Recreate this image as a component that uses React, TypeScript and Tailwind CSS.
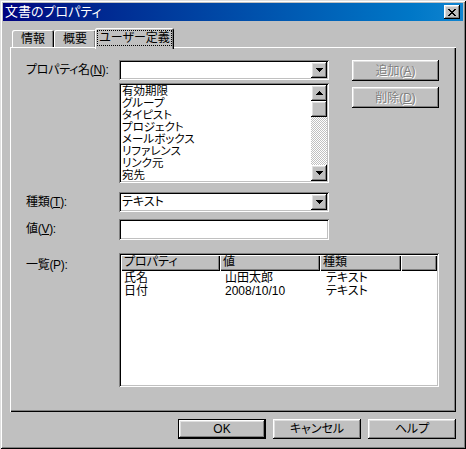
import type { ReactNode } from "react";

const raised =
  "shadow-[inset_-1px_-1px_#000,inset_1px_1px_#fff,inset_-2px_-2px_#808080,inset_2px_2px_#dfdfdf]";
const sunken =
  "shadow-[inset_1px_1px_#808080,inset_-1px_-1px_#fff,inset_2px_2px_#000,inset_-2px_-2px_#c0c0c0]";

const listItems = ["有効期限", "グループ", "タイピスト", "プロジェクト", "メールボックス", "リファレンス", "リンク元", "宛先"];

const rows = [
  { name: "氏名", value: "山田太郎", type: "テキスト" },
  { name: "日付", value: "2008/10/10", type: "テキスト" },
];

function Arrow({ up = false }: { up?: boolean }) {
  return (
    <svg width="7" height="4" viewBox="0 0 7 4" shapeRendering="crispEdges" className={up ? "rotate-180" : ""}>
      <rect x="0" y="0" width="7" height="1" />
      <rect x="1" y="1" width="5" height="1" />
      <rect x="2" y="2" width="3" height="1" />
      <rect x="3" y="3" width="1" height="1" />
    </svg>
  );
}

function ArrowButton({ up = false }: { up?: boolean }) {
  return (
    <div className={`w-[16px] h-[16px] shrink-0 bg-[#c0c0c0] ${raised} flex items-center justify-center`}>
      <Arrow up={up} />
    </div>
  );
}

function Combo({ value }: { value?: string }) {
  return (
    <div className={`h-[20px] bg-white ${sunken} flex items-center p-[2px]`}>
      <span className="flex-1 pl-[1px] leading-[16px]">{value}</span>
      <ArrowButton />
    </div>
  );
}

function Key({ k }: { k: string }) {
  return <span className="underline underline-offset-[1px]">{k}</span>;
}

function Label({ children, className = "" }: { children: ReactNode; className?: string }) {
  return <div className={`w-[93px] shrink-0 leading-[16px] tracking-[-0.3px] ${className}`}>{children}</div>;
}

function Button({
  children,
  disabled = false,
  isDefault = false,
  className = "",
}: {
  children: ReactNode;
  disabled?: boolean;
  isDefault?: boolean;
  className?: string;
}) {
  return (
    <div
      className={`bg-[#c0c0c0] flex items-center justify-center leading-[16px] ${
        isDefault ? "border border-black" : ""
      } ${className}`}
    >
      <div
        className={`w-full h-full flex items-center justify-center ${raised} ${
          disabled ? "text-[#808080] [text-shadow:1px_1px_#fff]" : ""
        }`}
      >
        {children}
      </div>
    </div>
  );
}

function Tab({ label }: { label: string }) {
  return (
    <div className="w-[42px] h-[17px] shadow-[inset_1px_1px_#fff,inset_-1px_0_#000,inset_-2px_0_#808080] rounded-t-[2px] flex items-start justify-center pt-[2px] leading-[14px]">
      {label}
    </div>
  );
}

const cols = ["w-[99px]", "w-[100px]", "w-[81px]"];

export default function App() {
  return (
    <div className="w-[466px] h-[449px] bg-[#c0c0c0] p-[3px] shadow-[inset_1px_1px_#dfdfdf,inset_-1px_-1px_#000,inset_2px_2px_#fff,inset_-2px_-2px_#808080] text-[12px] text-black font-['Liberation_Sans','Noto_Sans_CJK_JP',sans-serif] [font-feature-settings:'palt'] flex flex-col">
      {/* Title bar */}
      <div className="h-[18px] shrink-0 flex items-center justify-between bg-gradient-to-r from-[#000080] to-[#1084d0] pl-[2px] pr-[3px]">
        <span className="text-white text-[13px] leading-[16px]">文書のプロパティ</span>
        <div className={`w-[16px] h-[14px] bg-[#c0c0c0] ${raised} flex items-center justify-center`}>
          <svg width="8" height="7" viewBox="0 0 8 7" shapeRendering="crispEdges">
            <path d="M0 0h2v1h1v1h2V1h1V0h2v1H7v1H6v1H5v1h1v1h1v1h1v1H6V6H5V5H3v1H2v1H0V6h1V5h1V4h1V3H2V2H1V1H0z" />
          </svg>
        </div>
      </div>

      {/* Tabs */}
      <div className="mt-[7px] h-[19px] shrink-0 flex items-end pl-[9px]">
        <Tab label="情報" />
        <Tab label="概要" />
        <div className="relative z-10 -mb-[2px] -ml-[1px] w-[79px] h-[21px] bg-[#c0c0c0] shadow-[inset_1px_1px_#fff,inset_-1px_0_#000,inset_-2px_0_#808080] rounded-t-[2px] flex items-start justify-center pt-[2px]">
          <span className="border border-dotted border-black px-[1px] leading-[14px]">ユーザー定義</span>
        </div>
      </div>

      {/* Tab page */}
      <div className="mx-[7px] h-[365px] shrink-0 shadow-[inset_1px_1px_#fff,inset_-1px_-1px_#000,inset_-2px_-2px_#808080] pl-[16px] pt-[13px]">
        <div className="flex">
          <Label className="pt-[2px]">
            プロパティ名(<Key k="N" />):
          </Label>
          <div className="w-[210px] flex flex-col gap-[3px]">
            <Combo />
            <div className={`h-[100px] bg-white ${sunken} p-[2px] flex`}>
              <div className="flex-1 pl-[1px] text-[11.5px] leading-[12px] overflow-hidden">
                {listItems.map((item) => (
                  <div key={item} className="h-[12px]">
                    {item}
                  </div>
                ))}
              </div>
              <div className="w-[16px] flex flex-col">
                <ArrowButton up />
                <div className={`w-[16px] h-[16px] bg-[#c0c0c0] ${raised}`} />
                <div className="flex-1 bg-[image:repeating-conic-gradient(#fff_0_25%,#c0c0c0_0_50%)] bg-[length:2px_2px]" />
                <ArrowButton />
              </div>
            </div>
          </div>
          <div className="ml-[23px] w-[87px] flex flex-col gap-[6px]">
            <Button disabled className="h-[21px]">
              追加(<Key k="A" />)
            </Button>
            <Button disabled className="h-[21px]">
              削除(<Key k="D" />)
            </Button>
          </div>
        </div>

        <div className="mt-[9px] flex">
          <Label className="pt-[2px]">
            種類(<Key k="T" />):
          </Label>
          <div className="w-[210px]">
            <Combo value="テキスト" />
          </div>
        </div>

        <div className="mt-[7px] flex">
          <Label className="pt-[2px]">
            値(<Key k="V" />):
          </Label>
          <div className={`w-[210px] h-[21px] bg-white ${sunken}`} />
        </div>

        <div className="mt-[13px] flex">
          <Label className="pt-[4px]">一覧(P):</Label>
          <div className={`w-[320px] h-[134px] bg-white ${sunken} p-[2px] flex flex-col`}>
            <div className="flex h-[16px] leading-[15px]">
              {["プロパティ", "値", "種類"].map((h, i) => (
                <div
                  key={h}
                  className={`${cols[i]} bg-[#c0c0c0] pl-[3px] shadow-[inset_1px_1px_#fff,inset_-1px_-1px_#000,inset_-2px_-2px_#808080]`}
                >
                  {h}
                </div>
              ))}
              <div className="flex-1 bg-[#c0c0c0] shadow-[inset_1px_1px_#fff,inset_-1px_-1px_#000,inset_-2px_-2px_#808080]" />
            </div>
            <div className="pt-[1px]">
              {rows.map((r) => (
                <div key={r.name} className="flex leading-[13px]">
                  <div className={`${cols[0]} pl-[3px]`}>{r.name}</div>
                  <div className={`${cols[1]} pl-[5px]`}>{r.value}</div>
                  <div className={`${cols[2]} pl-[6px]`}>{r.type}</div>
                </div>
              ))}
            </div>
          </div>
        </div>
      </div>

      {/* Dialog buttons */}
      <div className="mx-[7px] mt-[7px] flex justify-end gap-[7px]">
        <Button isDefault className="w-[88px] h-[20px]">
          OK
        </Button>
        <Button className="w-[88px] h-[20px]">キャンセル</Button>
        <Button className="w-[88px] h-[20px]">ヘルプ</Button>
      </div>
    </div>
  );
}
